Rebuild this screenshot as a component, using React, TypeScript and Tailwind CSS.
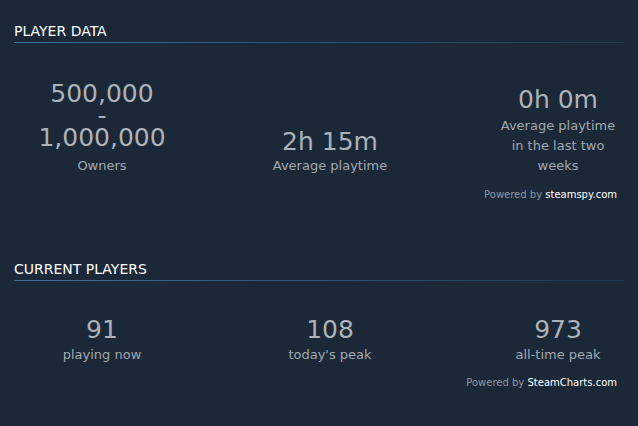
import React from "react";

function Stat({ value, label, mt }: { value: React.ReactNode; label: React.ReactNode; mt: string }) {
  return (
    <div className="w-[130px] text-center">
      <div className="text-[25px] leading-[22px] text-[#acb2b8]">{value}</div>
      <div className={`text-[13px] leading-[20px] text-[#a0a8b0] ${mt}`}>{label}</div>
    </div>
  );
}

function Header({ title }: { title: string }) {
  return (
    <div>
      <div className="text-[14px] leading-[20px] text-white uppercase pb-px">{title}</div>
      <div className="h-px bg-linear-to-r from-[#3f7193] to-[#213a4e]" />
    </div>
  );
}

export default function App() {
  return (
    <div className="w-[638px] h-[426px] bg-[#1b2838] px-[14px] pt-[21px] font-['DejaVu_Sans',sans-serif]">
      <Header title="Player Data" />
      <div className="flex justify-between items-end mt-[40px] pl-[23px] pr-px">
        <Stat
          value={
            <>
              500,000
              <br />
              -
              <br />
              1,000,000
            </>
          }
          label="Owners"
          mt="mt-[7px]"
        />
        <Stat value="2h 15m" label="Average playtime" mt="mt-[3px]" />
        <Stat
          value="0h 0m"
          label={
            <>
              Average playtime
              <br />
              in the last two
              <br />
              weeks
            </>
          }
          mt="mt-[5px]"
        />
      </div>
      <div className="mt-[12px] text-right pr-[7px] text-[10px] leading-[14px] text-[#8f98a0]">
        Powered by <span className="text-white">steamspy.com</span>
      </div>

      <div className="mt-[57px]">
        <Header title="Current Players" />
      </div>
      <div className="flex justify-between items-end mt-[38px] pl-[23px] pr-px">
        <Stat value="91" label="playing now" mt="mt-[4px]" />
        <Stat value="108" label="today's peak" mt="mt-[4px]" />
        <Stat value="973" label="all-time peak" mt="mt-[4px]" />
      </div>
      <div className="mt-[11px] text-right pr-[7px] text-[10px] leading-[14px] text-[#8f98a0]">
        Powered by <span className="text-white">SteamCharts.com</span>
      </div>
    </div>
  );
}
